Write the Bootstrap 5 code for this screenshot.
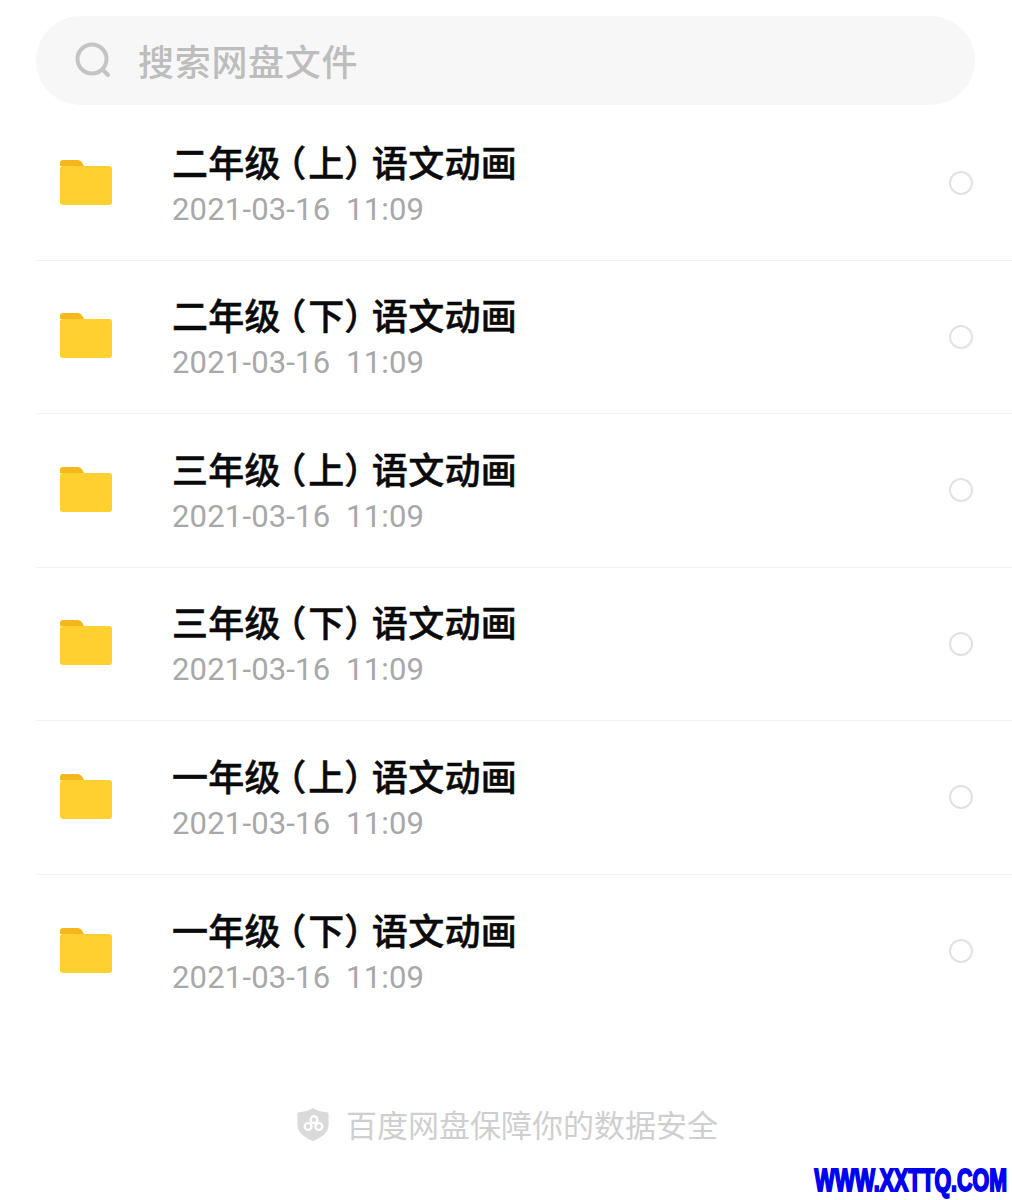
<!DOCTYPE html>
<html lang="zh">
<head>
    <meta charset="UTF-8">
    <meta name="viewport" content="width=device-width, initial-scale=1.0">
    <title>百度网盘</title>
    <link href="https://cdn.jsdelivr.net/npm/bootstrap@5.3.0/dist/css/bootstrap.min.css" rel="stylesheet">
    <style>
        body {
            width: 1012px;
            height: 1200px;
            overflow: hidden;
            font-family: "Roboto", "Noto Sans CJK SC", sans-serif;
            background: #fff;
        }
        .search-pill {
            height: 89px;
            margin: 16px 37px 2.2px 36px;
            padding-left: 39px;
            padding-bottom: 2px;
            background: #f7f7f7;
            border-radius: 45px;
            color: #bdbdbd;
            font-size: 36px;
            font-weight: 500;
            letter-spacing: .7px;
            font-family: "Noto Sans CJK SC", sans-serif;
        }
        .search-pill svg { margin-right: 27px; }
        .file-list { margin-left: 36px; }
        .file-row {
            height: 153.5px;
            border-bottom: 1px solid #f2f2f2;
            padding-left: 24px;
            padding-right: 39px;
        }
        .file-row:last-child { border-bottom: 0; }
        .folder-icon { margin-right: 60px; margin-bottom: 2px; flex: none; }
        .file-name {
            font-family: "Noto Sans CJK SC", sans-serif;
            font-size: 36px;
            font-weight: 500;
            line-height: 44px;
            color: #0a0a0a;
            -webkit-text-stroke: .5px #0a0a0a;
            letter-spacing: .3px;
            font-feature-settings: "palt";
        }
        .paren-open { margin: 0 3px 0 6px; }
        .paren-close { margin: 0 8px 0 1px; }
        .file-date {
            font-size: 31px;
            line-height: 44px;
            margin-top: 5px;
            color: #a8a8a8;
            white-space: pre;
            letter-spacing: .18px;
        }
        .check-ring {
            width: 24px;
            height: 24px;
            border: 2px solid #e2e2e2;
            border-radius: 50%;
        }
        .safe-note {
            margin-top: 76px;
            padding-left: 3px;
            font-family: "Noto Sans CJK SC", sans-serif;
            font-size: 31px;
            line-height: 40px;
            color: #cfcfcf;
            gap: 17px;
        }
        .site-mark {
            position: absolute;
            right: 5px;
            bottom: 1px;
            font-family: "Liberation Sans", sans-serif;
            font-weight: 700;
            font-size: 31px;
            line-height: 36px;
            color: #0000f0;
            -webkit-text-stroke: 2px #0000f0;
            transform: scaleX(.69);
            transform-origin: right center;
        }
    </style>
</head>
<body class="position-relative">
    <div class="search-pill d-flex align-items-center">
        <svg width="36" height="36" viewBox="0 0 36 36" fill="none" stroke="#c4c4c4" stroke-width="4" stroke-linecap="round">
            <circle cx="17" cy="17" r="14.5"/>
            <path d="M28 28l5 5"/>
        </svg>
        <span>搜索网盘文件</span>
    </div>

    <div class="file-list" id="files"></div>

    <div class="safe-note d-flex justify-content-center align-items-center">
        <svg width="32" height="35" viewBox="0 0 32 36">
            <path d="M16 1c4 2.500 9 4 14.500 4.500 1 .1 1.500.7 1.500 1.500v11c0 8-7 13.500-16 17C7 31.500 0 26 0 18V7c0-.8.5-1.400 1.500-1.500C7 5 12 3.500 16 1z" fill="#dadada"/>
            <g fill="none" stroke="#fff" stroke-width="2.400">
                <circle cx="17" cy="13" r="3.500"/>
                <circle cx="11" cy="20" r="3.500"/>
                <circle cx="22" cy="20" r="3.500"/>
            </g>
        </svg>
        <span>百度网盘保障你的数据安全</span>
    </div>

    <div class="site-mark">WWW.XXTTQ.COM</div>

    <script>
        // 文件列表
        var names = [['二年级', '上'], ['二年级', '下'], ['三年级', '上'], ['三年级', '下'], ['一年级', '上'], ['一年级', '下']];
        var html = '';
        names.forEach(function (n) {
            html += '<div class="file-row d-flex align-items-center">' +
                '<svg class="folder-icon" width="52" height="45" viewBox="0 0 52 45">' +
                '<path d="M0 3a3 3 0 0 1 3-3h14c3 0 5 1.500 7 6h-24z" fill="#f5b81c"/>' +
                '<rect x="0" y="6" width="52" height="39" rx="3" fill="#ffd02f"/>' +
                '</svg>' +
                '<div class="flex-grow-1 pt-1"><div class="file-name">' + n[0] +
                '<span class="paren-open">（</span>' + n[1] + '<span class="paren-close">）</span>语文动画</div>' +
                '<div class="file-date">2021-03-16  11:09</div></div>' +
                '<div class="check-ring"></div></div>';
        });
        document.getElementById('files').innerHTML = html;
    </script>
    <script src="https://cdn.jsdelivr.net/npm/bootstrap@5.3.0/dist/js/bootstrap.bundle.min.js"></script>
</body>
</html>
